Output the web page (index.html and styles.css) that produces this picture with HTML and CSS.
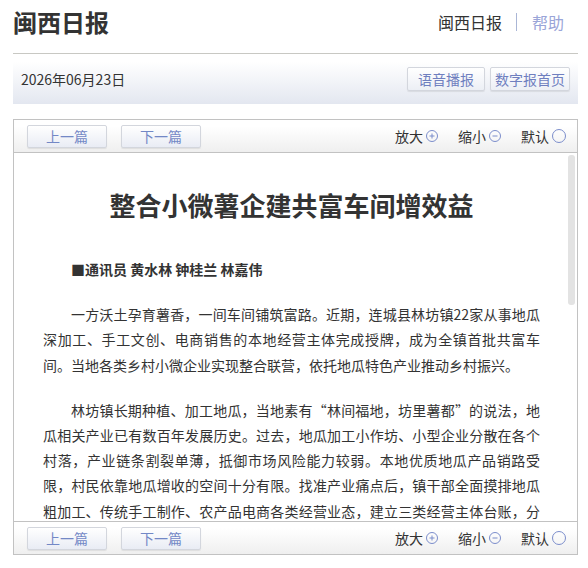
FILE: index.html
```html
<!DOCTYPE html>
<html lang="zh-CN">
<head>
    <meta charset="UTF-8">
    <meta name="viewport" content="width=device-width, initial-scale=1.0">
    <title>整合小微薯企建共富车间增效益 - 闽西日报</title>
    <link rel="stylesheet" href="styles.css">
</head>
<body>
    <div class="page">
        <header class="masthead">
            <h1 class="logo">闽西日报</h1>
            <nav class="top-nav">
                <a class="nav-home" href="#">闽西日报</a>
                <span class="nav-sep"></span>
                <a class="nav-help" href="#">帮助</a>
            </nav>
        </header>

        <div class="date-bar">
            <span class="date">2026年06月23日</span>
            <div class="date-actions">
                <button class="btn" type="button">语音播报</button>
                <button class="btn" type="button">数字报首页</button>
            </div>
        </div>

        <div class="reader">
            <div class="toolbar toolbar-top">
                <div class="pager">
                    <button class="pager-btn" type="button">上一篇</button>
                    <button class="pager-btn" type="button">下一篇</button>
                </div>
                <div class="zoom-controls">
                    <span class="zoom-item">放大
                        <svg class="zoom-icon" width="12" height="12" viewBox="0 0 12 12"><circle cx="6" cy="6" r="5.5"/><path d="M3.5 6h5M6 3.5v5"/></svg>
                    </span>
                    <span class="zoom-item">缩小
                        <svg class="zoom-icon" width="12" height="12" viewBox="0 0 12 12"><circle cx="6" cy="6" r="5.5"/><path d="M3.5 6h5"/></svg>
                    </span>
                    <span class="zoom-item">默认
                        <svg class="zoom-icon" width="14" height="14" viewBox="0 0 14 14"><circle cx="7" cy="7" r="6.5"/></svg>
                    </span>
                </div>
            </div>

            <div class="article-wrap">
                <div class="article-scroll">
                    <article class="article">
                        <h2 class="article-title">整合小微薯企建共富车间增效益</h2>
                        <p class="byline">■通讯员 黄水林 钟桂兰 林嘉伟</p>
                        <p>一方沃土孕育薯香，一间车间铺筑富路。近期，连城县林坊镇22家从事地瓜深加工、手工文创、电商销售的本地经营主体完成授牌，成为全镇首批共富车间。当地各类乡村小微企业实现整合联营，依托地瓜特色产业推动乡村振兴。</p>
                        <p>林坊镇长期种植、加工地瓜，当地素有“林间福地，坊里薯都”的说法，地瓜相关产业已有数百年发展历史。过去，地瓜加工小作坊、小型企业分散在各个村落，产业链条割裂单薄，抵御市场风险能力较弱。本地优质地瓜产品销路受限，村民依靠地瓜增收的空间十分有限。找准产业痛点后，镇干部全面摸排地瓜粗加工、传统手工制作、农产品电商各类经营业态，建立三类经营主体台账，分类施策，推动小微主体由“单打独斗”向“抱团发展”转变。</p>
                        <p>今年以来，林坊镇按照“龙头带动、抱团发展”的思路，引导分散经营的小微主体整合资源，共建共富车间。车间统一采购原料、统一加工标准、统一品牌包装，由专业合作社负责技术指导和市场对接，村民在家门口就能实现就业增收。</p>
                        <p>“以前各做各的，价格压得很低，现在统一标准、统一销售，订单稳定多了。”林坊村地瓜干加工户林大姐说。目前，全镇共富车间已吸纳周边群众120余人就业，人均月增收2000余元，带动村集体经济年增收30余万元。</p>
                        <p>下一步，林坊镇将持续延伸地瓜产业链条，推动精深加工、文旅融合、电商直播协同发展，让小地瓜成为群众增收致富的“金薯”。</p>
                    </article>
                </div>
                <!-- scrollbar thumb, drawn over the text column's right edge -->
                <div class="scroll-thumb"></div>
            </div>

            <div class="toolbar toolbar-bottom">
                <div class="pager">
                    <button class="pager-btn" type="button">上一篇</button>
                    <button class="pager-btn" type="button">下一篇</button>
                </div>
                <div class="zoom-controls">
                    <span class="zoom-item">放大
                        <svg class="zoom-icon" width="12" height="12" viewBox="0 0 12 12"><circle cx="6" cy="6" r="5.5"/><path d="M3.5 6h5M6 3.5v5"/></svg>
                    </span>
                    <span class="zoom-item">缩小
                        <svg class="zoom-icon" width="12" height="12" viewBox="0 0 12 12"><circle cx="6" cy="6" r="5.5"/><path d="M3.5 6h5"/></svg>
                    </span>
                    <span class="zoom-item">默认
                        <svg class="zoom-icon" width="14" height="14" viewBox="0 0 14 14"><circle cx="7" cy="7" r="6.5"/></svg>
                    </span>
                </div>
            </div>
        </div>
    </div>
</body>
</html>
```

FILE: styles.css
```css
:root {
    --text-color: #333333;
    --link-color: #6f7fbf;
    --link-light: #9aa5d8;
    --line-color: #c8c8c3;
    --box-border: #c2c2c2;
    --icon-color: #7b8dcb;
}

* {
    box-sizing: border-box;
}

body {
    margin: 0;
    background: #ffffff;
    color: var(--text-color);
    font-family: "Microsoft YaHei", "Noto Sans CJK SC", sans-serif;
    font-size: 14px;
}

.page {
    width: 565px;
    margin-left: 13px;
}

/* Header */
.masthead {
    display: flex;
    align-items: center;
    justify-content: space-between;
    height: 54px;
    padding: 0 14px 9px 0;
    border-bottom: 1px solid var(--line-color);
}

.logo {
    margin: 0;
    font-size: 24px;
    line-height: 30px;
    font-weight: bold;
    color: var(--text-color);
}

.top-nav {
    display: flex;
    align-items: center;
    font-size: 16px;
}

.top-nav a {
    text-decoration: none;
}

.nav-home {
    color: var(--text-color);
}

.nav-sep {
    width: 1px;
    height: 18px;
    margin: 0 15px 0 14px;
    background: #aab6d6;
}

.nav-help {
    color: var(--link-light);
}

/* Date bar */
.date-bar {
    display: flex;
    align-items: center;
    justify-content: space-between;
    height: 50px;
    padding: 0 8px;
    background: linear-gradient(to bottom, #ffffff 15%, #e3e7f0 100%);
}

.date {
    font-size: 14px;
}

.date-actions {
    display: flex;
    gap: 5px;
}

.btn {
    min-width: 78px;
    height: 24px;
    padding: 0 4px;
    font-family: inherit;
    font-size: 14px;
    line-height: 22px;
    color: var(--link-color);
    background: linear-gradient(to bottom, #ffffff, #eceff5);
    border: 1px solid #d3d6dd;
    border-radius: 2px;
    box-shadow: 0 1px 1px rgba(0,0,0,0.08);
    cursor: pointer;
}

.btn + .btn {
    min-width: 80px;
}

/* Reader box */
.reader {
    display: flex;
    flex-direction: column;
    height: 436px;
    margin-top: 15px;
    border: 1px solid var(--box-border);
}

.toolbar {
    display: flex;
    align-items: center;
    justify-content: space-between;
    flex: none;
    height: 33px;
    padding: 0 11px 0 13px;
    background: linear-gradient(to bottom, #ffffff 20%, #efefef 100%);
}

.toolbar-top {
    border-bottom: 1px solid var(--box-border);
}

.toolbar-bottom {
    border-top: 1px solid var(--box-border);
}

.pager {
    display: flex;
    gap: 14px;
}

.pager-btn {
    width: 80px;
    height: 23px;
    padding: 0;
    font-family: inherit;
    font-size: 14px;
    line-height: 21px;
    color: #7388c6;
    background: linear-gradient(to bottom, #ffffff, #e9ecf4);
    border: 1px solid #d3d6dd;
    border-radius: 2px;
    box-shadow: 0 1px 1px rgba(0,0,0,0.08);
    cursor: pointer;
}

.zoom-controls {
    display: flex;
    align-items: center;
    gap: 20px;
}

.zoom-item {
    display: flex;
    align-items: center;
    gap: 3px;
    cursor: pointer;
}

.zoom-icon {
    fill: none;
    stroke: var(--icon-color);
    stroke-width: 1;
}

/* Article */
.article-wrap {
    position: relative;
    flex: 1;
    min-height: 0;
}

.article-scroll {
    height: 100%;
    overflow: hidden;
}

.scroll-thumb {
    position: absolute;
    top: 2px;
    right: 2px;
    width: 7px;
    height: 150px;
    background: #e3e3e3;
    border-radius: 3px;
}

.article {
    width: 497px;
    margin-left: 29px;
    padding: 34px 0 30px;
}

.article-title {
    margin: 0 0 34px;
    font-size: 26px;
    line-height: 36px;
    font-weight: bold;
    text-align: center;
    color: var(--text-color);
}

.article p {
    margin: 0 0 20px;
    font-size: 14px;
    line-height: 1.8;
    text-indent: 2em;
    text-align: justify;
}

.article .byline {
    font-weight: bold;
}
```
